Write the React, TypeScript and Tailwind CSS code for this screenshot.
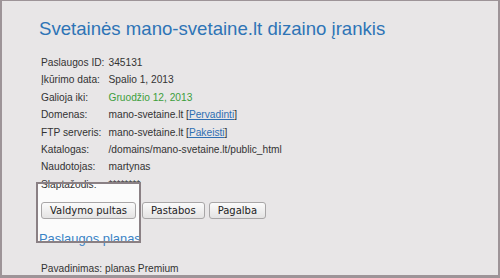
import React from "react";

const rows: { label: string; value: React.ReactNode }[] = [
  { label: "Paslaugos ID:", value: "345131" },
  { label: "Įkūrimo data:", value: "Spalio 1, 2013" },
  {
    label: "Galioja iki:",
    value: <span className="text-[#3c9e3c]">Gruodžio 12, 2013</span>,
  },
  {
    label: "Domenas:",
    value: (
      <>
        mano-svetaine.lt [<a className="text-[#2f6fb3] underline">Pervadinti</a>]
      </>
    ),
  },
  {
    label: "FTP serveris:",
    value: (
      <>
        mano-svetaine.lt [<a className="text-[#2f6fb3] underline">Pakeisti</a>]
      </>
    ),
  },
  { label: "Katalogas:", value: "/domains/mano-svetaine.lt/public_html" },
  { label: "Naudotojas:", value: "martynas" },
  { label: "Slaptažodis:", value: "********" },
];

const Button = ({ children, className = "" }: { children: React.ReactNode; className?: string }) => (
  <button
    className={`h-[17px] px-[8px] border border-[#a8a6a7] rounded-[3px] bg-gradient-to-b from-[#fbfbfb] to-[#e4e3e3] text-[10px] leading-[15px] text-[#222] font-['DejaVu_Sans',sans-serif] ${className}`}
  >
    {children}
  </button>
);

export default function App() {
  return (
    <div className="relative w-[500px] h-[278px] overflow-hidden bg-[#e8e6e7] border-t border-l-2 border-r-2 border-b-[3px] border-[#9d9498] font-['Liberation_Sans',Arial,sans-serif] text-[#333]">
      {/* highlight fill */}
      <div className="absolute left-[34px] top-[181px] w-[105px] h-[61px] bg-[#fbfbfb]" />

      <div className="relative pl-[37px] pt-[17px]">
        <h1 className="text-[18.6px] leading-[22px] text-[#2e74b6]">
          Svetainės mano-svetaine.lt dizaino įrankis
        </h1>

        <div className="mt-[14px] ml-[2px] text-[10.2px] leading-[17.4px]">
          {rows.map((r) => (
            <div key={r.label} className="flex">
              <span className="w-[67.5px] shrink-0">{r.label}</span>
              <span>{r.value}</span>
            </div>
          ))}
        </div>

        <div className="mt-[9px] ml-[2px] flex">
          <Button>Valdymo pultas</Button>
          <Button className="ml-[6px]">Pastabos</Button>
          <Button className="ml-[4px]">Pagalba</Button>
        </div>

        <h2 className="mt-[12px] text-[12.9px] leading-[16px] text-[#3a83c6]">Paslaugos planas</h2>

        <div className="mt-[12.8px] ml-[2px] text-[10.2px] leading-[17.4px]">
          Pavadinimas: planas Premium
        </div>
      </div>

      {/* highlight border */}
      <div className="absolute left-[34px] top-[181px] w-[105px] h-[61px] border-2 border-[#8a8084] pointer-events-none" />
    </div>
  );
}
